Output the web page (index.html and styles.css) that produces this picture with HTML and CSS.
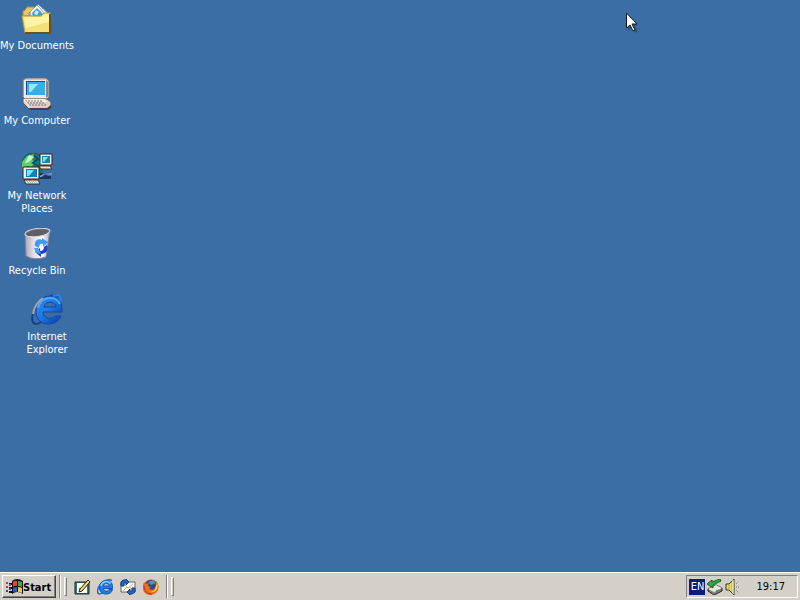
FILE: index.html
```html
<!DOCTYPE html>
<html lang="en">
<head>
<meta charset="utf-8">
<title>Desktop</title>
<link rel="stylesheet" href="styles.css">
</head>
<body>
<main class="desktop">
  <button class="shortcut documents" type="button">
    <svg class="icon" viewBox="0 0 32 32" aria-hidden="true">
      <path d="M4 7l2-3h7l3 4v5H2V8z" fill="#e8c85c" stroke="#a88c3c"/>
      <path d="M8 10L17 1l12 11-3 10H10z" fill="#f4f8fc" stroke="#6f8494"/>
      <path d="M9 9l7-7 10 11H10z" fill="#fff" stroke="#8fa4b4"/>
      <path d="M11 10l5-5 6 6v3H12z" fill="#3e9ed6"/>
      <path d="M15 7l3 2-2 3-3-1z" fill="#c4f0ff"/>
      <path d="M1 13h19l3-3h6v20H4z" fill="#f5df79" stroke="#b99a43"/>
      <path d="M3 14h18l3-3h4v8L5 25z" fill="#fff3a4"/>
      <path d="M4 30h25V11" fill="none" stroke="#655326" stroke-width="2"/>
    </svg>
    <span>My Documents</span>
  </button>
  <button class="shortcut computer" type="button">
    <svg class="icon" viewBox="0 0 32 32" aria-hidden="true">
      <path d="M2 2l3-2h20l3 3v16l-3 3H4l-2-3z" fill="#cbc7c0" stroke="#77757b"/>
      <path d="M3 2h22v18H3z" fill="#eeeae2"/>
      <path d="M25 2l2 2v14l-2 2z" fill="#88848c"/>
      <path d="M5 3h19v14H5z" fill="#174d8c"/>
      <path d="M6 4h18v13H6z" fill="#35afe9"/>
      <path d="M8 6h9l-7 8H8z" fill="#95eaff"/>
      <path d="M2 21h24l4 3v5l-3 2H8l-6-6z" fill="#d9d1c8" stroke="#64595c"/>
      <path d="M2 21h22l3 3H6z" fill="#f5eee3"/>
      <path d="M4 23h18M6 25h18M8 27h18" stroke="#837277" stroke-width="1" stroke-dasharray="2 1"/>
      <path d="M8 30h18l4-3v3l-3 2H9z" fill="#4b3b43"/>
      <path d="M3 22l6 7" stroke="#fff"/>
    </svg>
    <span>My Computer</span>
  </button>
  <button class="shortcut network" type="button">
    <svg class="icon" viewBox="0 0 32 32" aria-hidden="true">
      <circle cx="12" cy="11" r="11" fill="#15826d" stroke="#075b66"/>
      <path d="M1 9l5-6 8-2-3 6 4 2-5 5-4-1-3 6-2-4z" fill="#63ce61"/>
      <path d="M8 2l5 2-5 5-4 1z" fill="#c3ffc8"/>
      <path d="M13 2l4 4-5 4 5 3-3 9" fill="none" stroke="#0c497c" stroke-width="2"/>
      <path d="M19 1h12v11H19z" fill="#eeeae2" stroke="#26272b"/>
      <path d="M21 3h8v7h-8z" fill="#1685b8"/><path d="M22 4h5l-4 5h-1z" fill="#7ae4ff"/>
      <path d="M18 13h11l2 3H20z" fill="#eee4ce" stroke="#3a3634"/>
      <path d="M2 14h16v12H2z" fill="#f3eee4" stroke="#26272b"/>
      <path d="M5 16h11v8H5z" fill="#137fb4"/><path d="M6 17h7l-5 6H6z" fill="#79e5ff"/>
      <path d="M3 27h14l2 4H5z" fill="#eee4ce" stroke="#383335"/>
      <path d="M6 28h10M7 30h10" stroke="#92877e" stroke-dasharray="1 1"/>
      <path d="M18 25h12M19 21h7l-3 3h7" fill="none" stroke="#19345d" stroke-width="2"/>
      <path d="M19 24l4-3h8" fill="none" stroke="#8fc1ed"/>
    </svg>
    <span>My Network Places</span>
  </button>
  <button class="shortcut recycle" type="button">
    <svg class="icon" viewBox="0 0 32 32" aria-hidden="true">
      <defs><linearGradient id="bin"><stop stop-color="#aaa8b4"/><stop offset=".35" stop-color="#e4dfe8"/><stop offset=".7" stop-color="#fff"/><stop offset="1" stop-color="#a6a9ba"/></linearGradient></defs>
      <path d="M4 5l1 23q8 5 20 1l4-27z" fill="url(#bin)" stroke="#85848f"/>
      <ellipse cx="16.500" cy="4.500" rx="12.500" ry="4" transform="rotate(-7 16 5)" fill="#747279" stroke="#ddd8df"/>
      <path d="M5 6q9-7 23-3l-4 3q-7 2-17 2z" fill="#605f66"/>
      <path d="M14 18c-1-5 3-8 7-6v-2l6 4-5 5v-3c-3-1-4 1-4 4z" fill="#3c9cf4"/>
      <path d="M26 17c2 5-1 9-6 9v3l-6-5 5-4v3c3 0 4-2 4-4z" fill="#2340d6"/>
      <path d="M13 20h4l3 6-5-1z" fill="#3fa4ef"/>
    </svg>
    <span>Recycle Bin</span>
  </button>
  <button class="shortcut explorer" type="button">
    <svg class="icon" viewBox="0 0 32 32" aria-hidden="true">
      <defs><linearGradient id="blue-e" x1="0" y1="0" x2="1" y2="1"><stop stop-color="#3c86e6"/><stop offset=".45" stop-color="#1c7aea"/><stop offset="1" stop-color="#0638a4"/></linearGradient></defs>
      <path d="M30 3C20-2 5 8 2 20c-3 10 3 13 11 6" fill="none" stroke="#163f87" stroke-width="2"/>
      <path fill-rule="evenodd" d="M31 18H12c0 7 10 8 12 4h6c-2 5-7 8-13 8C10 30 5 25 5 17 5 8 11 2 19 2c8 0 13 6 12 16zM13 13h12c0-6-11-7-12 0z" fill="url(#blue-e)" stroke="#1645a0"/>
      <path d="M7 14c1-6 6-10 12-10 5 0 8 2 10 6" fill="none" stroke="#4ba9f4" stroke-width="2"/>
      <path d="M12 4C6 8 3 14 2 20" fill="none" stroke="#aaa99f" stroke-width="2"/>
      <path d="M22 2c6-2 9 0 7 5" fill="none" stroke="#2687ee" stroke-width="2"/>
    </svg>
    <span>Internet Explorer</span>
  </button>
  <svg class="pointer" viewBox="0 0 12 21" aria-hidden="true">
    <path d="M2 2v17l4-4 3 6 3-2-3-5h3z" fill="#263954" opacity=".5"/>
    <path d="M.5 1v15l3.500-3 3 6 2-1-3-6h5z" fill="#fff" stroke="#101722"/>
  </svg>
</main>
<footer class="taskbar">
  <button class="start" type="button">
    <svg viewBox="0 0 17 16" aria-hidden="true">
      <path d="M6 2q5-4 11 0v13q-6-4-11 0z" fill="#111"/>
      <path d="M7 3q2-2 4-1v5q-2-1-4 1z" fill="#e34b34"/>
      <path d="M12 2q2 0 4 1v5q-2-1-4-1z" fill="#43a94b"/>
      <path d="M7 9q2-1 4-1v5q-2-1-4 0z" fill="#315ec7"/>
      <path d="M12 8q2 0 4 1v5q-2-1-4-1z" fill="#f0cb3d"/>
      <path d="M3 4h3v2H3zm0 4h3v2H3zm0 4h3v2H3z" fill="#111"/>
      <path d="M0 3h2v2H0zm0 4h2v2H0zm3-2h2v2H3z" fill="#bd3546"/><path d="M0 11h2v2H0zm3-2h2v2H3z" fill="#2e489c"/>
    </svg>
    <span>Start</span>
  </button>
  <span class="divider"></span><span class="grip"></span>
  <nav class="quick" aria-label="Quick Launch">
    <button type="button" aria-label="Show Desktop"><svg viewBox="0 0 16 16" aria-hidden="true">
      <path d="M1 3h14v12H1z" fill="#367b78" stroke="#142d31"/><path d="M3 4h10v10H3z" fill="#fffef2"/><path d="M5 9l2 3 6-9" fill="none" stroke="#53645b"/><path d="M6 10l8-9 2 2-8 9-3 1z" fill="#f0d568" stroke="#222"/>
    </svg></button>
    <button type="button" aria-label="Internet Explorer"><svg viewBox="0 0 32 32" aria-hidden="true">
      <path d="M30 3C20-2 5 8 2 20c-3 10 3 13 11 6" fill="none" stroke="#2068c5" stroke-width="3"/>
      <path fill-rule="evenodd" d="M31 19H13c0 6 9 7 11 2h7c-2 7-7 9-13 9C10 30 5 25 5 17 5 8 11 3 19 3c8 0 13 6 12 16zM13 14h11c0-6-10-7-11 0z" fill="#1f7ddd" stroke="#1256b3" stroke-width="2"/>
      <path d="M8 14c2-9 13-12 19-5" fill="none" stroke="#80d5fc" stroke-width="3"/>
    </svg></button>
    <button type="button" aria-label="Outlook Express"><svg viewBox="0 0 16 16" aria-hidden="true">
      <path d="M1 3h14v10H1z" fill="#fffdf0" stroke="#656369"/><path d="M4 5l4 4 5-4M3 12l4-4m3 0l3 4" fill="none" stroke="#c4b88e"/>
      <path d="M1 7V3l2-2h3V0l3 3-3 3V4H4v3zM15 9v4l-3 2h-2v1l-3-3 3-3v2h2V9z" fill="#2467c1" stroke="#173c7e"/>
    </svg></button>
    <button type="button" aria-label="Firefox"><svg viewBox="0 0 16 16" aria-hidden="true">
      <circle cx="8" cy="8" r="7.500" fill="#d54119"/><circle cx="8" cy="6" r="5" fill="#27488c"/><path d="M5 3l5-2 3 3-5 2z" fill="#4f91c8"/>
      <path d="M1 3l2 2 3-1-1 3 3 1-2 2 4 1 3-4V2c5 5 2 13-5 14C0 16-2 9 1 3z" fill="#eb6f20"/><path d="M14 4c2 6-2 10-7 9 5 0 6-4 6-6z" fill="#ffe35e"/><path d="M1 7c0 5 3 8 8 8" fill="none" stroke="#b82b19"/>
    </svg></button>
  </nav>
  <span class="divider"></span><span class="grip"></span>
  <div class="tray">
    <button class="language" type="button">EN</button>
    <button type="button" aria-label="Safely remove hardware"><svg viewBox="0 0 16 16" aria-hidden="true">
      <path d="M1 10l8-4 6 3v3l-8 4-6-4z" fill="#858681" stroke="#20221e"/><path d="M1 10l8-4 6 3-8 4z" fill="#e7e8dc"/><path d="M9 12l3-1" stroke="#268c3a"/>
      <path d="M0 5l5-4v2l8-3 1 2-8 4v3z" fill="#31ac48" stroke="#13602a"/>
    </svg></button>
    <button type="button" aria-label="Volume"><svg viewBox="0 0 16 16" aria-hidden="true">
      <path d="M1 5h3l5-5v16l-5-5H1z" fill="#e9e06b" stroke="#333"/><path d="M4 5v6M7 3v10" stroke="#aaa44b"/><path d="M8 1v14" stroke="#fffcc5"/><path d="M11 5l3-3m-3 6h4m-4 3l3 3" stroke="#777" stroke-dasharray="1 1"/>
    </svg></button>
    <time datetime="19:17">19:17</time>
  </div>
</footer>
</body>
</html>
```
FILE: styles.css
```css
* { box-sizing: border-box; }
body {
  margin: 0;
  min-height: 100vh;
  display: flex;
  flex-direction: column;
  background: #3a6ea5;
  font-family: "DejaVu Sans Condensed", "DejaVu Sans", sans-serif;
  font-size: 11px;
  line-height: 13px;
  color: #000;
}
button {
  font: inherit;
  color: inherit;
  padding: 0;
  border: 0;
  background: none;
}
svg { display: block; flex: none; }
.desktop { position: relative; flex: 1; }
.shortcut {
  position: absolute;
  left: 1px;
  width: 72px;
  display: flex;
  flex-direction: column;
  align-items: center;
  gap: 4px;
  color: #fff;
}
.icon { width: 32px; height: 32px; }
.shortcut span { margin: 0 -4px; }
.documents { top: 3px; }
.computer { top: 78px; }
.network { top: 153px; }
.network span, .explorer span { margin: 0 4px; }
.recycle { top: 228px; }
.explorer { left: 11px; top: 294px; }
.pointer {
  position: absolute;
  left: 626px;
  top: 12px;
  width: 12px;
  height: 21px;
}
.taskbar {
  display: flex;
  align-items: stretch;
  gap: 3px;
  height: 28px;
  padding: 3px 2px 2px;
  background: #d4d0c8;
  box-shadow: inset 0 1px #fff;
}
.start {
  display: flex;
  align-items: center;
  gap: 0;
  padding: 1px 4px 0 3px;
  font-weight: bold;
  border: 1px solid;
  border-color: #fff #404040 #404040 #fff;
  box-shadow: inset -1px -1px #808080;
}
.start svg { width: 17px; height: 16px; }
.divider {
  width: 2px;
  border-left: 1px solid #808080;
  border-right: 1px solid #fff;
}
.grip {
  width: 3px;
  margin: 2px 0;
  border: 1px solid;
  border-color: #fff #808080 #808080 #fff;
}
.quick {
  display: flex;
  align-items: center;
  gap: 7px;
  padding: 0 4px;
}
.quick svg, .tray svg { width: 16px; height: 16px; }
.tray {
  display: flex;
  align-items: center;
  gap: 2px;
  margin-left: auto;
  padding: 0 12px 0 2px;
  border: 1px solid;
  border-color: #808080 #fff #fff #808080;
}
.language {
  width: 16px;
  height: 16px;
  background: #0a1f70;
  color: #fff;
  text-align: center;
}
.tray time { margin-left: 13px; }
```
